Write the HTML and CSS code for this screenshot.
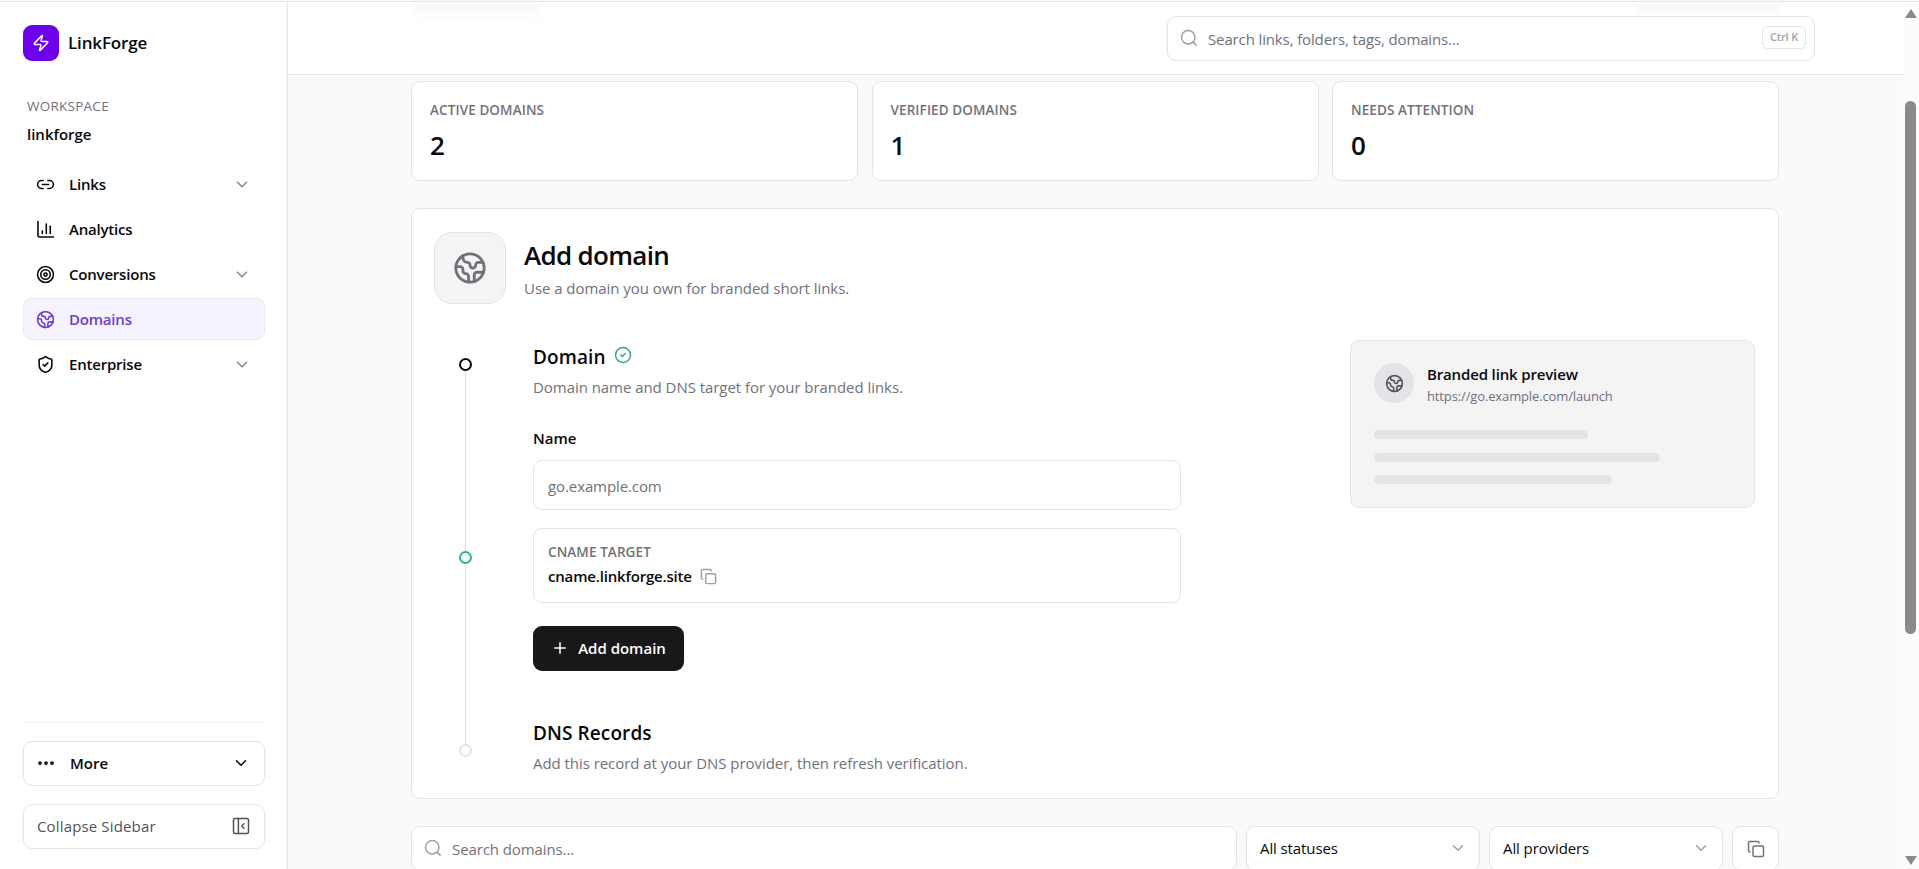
FILE: index.html
```
<!DOCTYPE html>
<html lang="en">
<head>
  <meta charset="utf-8">
  <title>Domains - LinkForge</title>
  <link rel="stylesheet" href="styles.css">
</head>
<body>
  <svg class="sprite">
    <symbol id="i-zap" viewBox="0 0 24 24"><path d="M4 14a1 1 0 0 1-.78-1.63l9.9-10.2a.5.5 0 0 1 .86.46l-1.92 6.02A1 1 0 0 0 13 10h7a1 1 0 0 1 .78 1.63l-9.9 10.2a.5.5 0 0 1-.86-.46l1.92-6.02A1 1 0 0 0 11 14z"/></symbol>
    <symbol id="i-link" viewBox="0 0 24 24"><path d="M9 17H7A5 5 0 0 1 7 7h2"/><path d="M15 7h2a5 5 0 1 1 0 10h-2"/><path d="M8 12h8"/></symbol>
    <symbol id="i-chart" viewBox="0 0 24 24"><path d="M2.5 2v17.5a2 2 0 0 0 2 2H22"/><path d="M8 17v-3"/><path d="M13 17V5"/><path d="M18 17V8"/></symbol>
    <symbol id="i-target" viewBox="0 0 24 24"><circle cx="12" cy="12" r="10"/><circle cx="12" cy="12" r="6"/><circle cx="12" cy="12" r="2"/></symbol>
    <symbol id="i-earth" viewBox="0 0 24 24"><path d="M21.54 15H17a2 2 0 0 0-2 2v4.54"/><path d="M7 3.34V5a3 3 0 0 0 3 3a2 2 0 0 1 2 2c0 1.1.9 2 2 2a2 2 0 0 0 2-2c0-1.1.9-2 2-2h3.17"/><path d="M11 21.95V18a2 2 0 0 0-2-2a2 2 0 0 1-2-2v-1a2 2 0 0 0-2-2H2.05"/><circle cx="12" cy="12" r="10"/></symbol>
    <symbol id="i-shield" viewBox="0 0 24 24"><path d="M20 13c0 5-3.5 7.5-7.66 8.95a1 1 0 0 1-.67-.01C7.5 20.5 4 18 4 13V6a1 1 0 0 1 1-1c2 0 4.5-1.2 6.24-2.72a1.17 1.17 0 0 1 1.52 0C14.51 3.81 17 5 19 5a1 1 0 0 1 1 1z"/><path d="m9 12 2 2 4-4"/></symbol>
    <symbol id="i-down" viewBox="0 0 24 24"><path d="m6 9 6 6 6-6"/></symbol>
    <symbol id="i-dots" viewBox="0 0 24 24"><circle cx="12" cy="12" r="1"/><circle cx="20" cy="12" r="1"/><circle cx="4" cy="12" r="1"/></symbol>
    <symbol id="i-panel" viewBox="0 0 24 24"><rect x="2" y="2" width="20" height="20" rx="2"/><path d="M8.5 2v20"/><path d="m16 15-3-3 3-3"/></symbol>
    <symbol id="i-search" viewBox="0 0 24 24"><circle cx="11" cy="11" r="9"/><path d="m21.500 21.500-4-4"/></symbol>
    <symbol id="i-check" viewBox="0 0 24 24"><circle cx="12" cy="12" r="10"/><path d="m9 12 2 2 4-4"/></symbol>
    <symbol id="i-copy" viewBox="0 0 24 24"><rect x="8" y="8" width="14" height="14" rx="2"/><path d="M4 16c-1.1 0-2-.9-2-2V4c0-1.1.9-2 2-2h10c1.1 0 2 .9 2 2"/></symbol>
    <symbol id="i-plus" viewBox="0 0 24 24"><path d="M5 12h14"/><path d="M12 5v14"/></symbol>
  </svg>

  <div class="topline"></div>
  <div class="app">
    <aside class="sidebar">
      <div class="brand">
        <span class="logo"><svg class="icon"><use href="#i-zap"/></svg></span>
        <span class="brand-name">LinkForge</span>
      </div>
      <div class="workspace">
        <div class="caps">WORKSPACE</div>
        <div class="workspace-name">linkforge</div>
      </div>
      <nav class="nav">
        <a class="nav-item"><svg class="icon"><use href="#i-link"/></svg><span>Links</span><svg class="icon chev"><use href="#i-down"/></svg></a>
        <a class="nav-item"><svg class="icon"><use href="#i-chart"/></svg><span>Analytics</span></a>
        <a class="nav-item"><svg class="icon"><use href="#i-target"/></svg><span>Conversions</span><svg class="icon chev"><use href="#i-down"/></svg></a>
        <a class="nav-item active"><svg class="icon"><use href="#i-earth"/></svg><span>Domains</span></a>
        <a class="nav-item"><svg class="icon"><use href="#i-shield"/></svg><span>Enterprise</span><svg class="icon chev"><use href="#i-down"/></svg></a>
      </nav>
      <div class="side-footer">
        <button class="side-btn more"><svg class="icon dots"><use href="#i-dots"/></svg><span>More</span><svg class="icon"><use href="#i-down"/></svg></button>
        <button class="side-btn collapse"><span>Collapse Sidebar</span><svg class="icon"><use href="#i-panel"/></svg></button>
      </div>
    </aside>

    <div class="page">
      <header class="topbar">
        <div class="ghost ghost-title"></div>
        <div class="ghost ghost-button"></div>
        <div class="search">
          <svg class="icon"><use href="#i-search"/></svg>
          <span>Search links, folders, tags, domains...</span>
          <kbd>Ctrl K</kbd>
        </div>
      </header>
      <main class="content">
        <section class="stats">
          <div class="card stat"><div class="caps">ACTIVE DOMAINS</div><div class="num">2</div></div>
          <div class="card stat"><div class="caps">VERIFIED DOMAINS</div><div class="num">1</div></div>
          <div class="card stat"><div class="caps">NEEDS ATTENTION</div><div class="num">0</div></div>
        </section>

        <section class="card add">
          <div class="add-head">
            <div class="tile"><svg class="icon"><use href="#i-earth"/></svg></div>
            <div>
              <h1>Add domain</h1>
              <p class="muted">Use a domain you own for branded short links.</p>
            </div>
          </div>
          <div class="add-body">
            <div class="timeline">
              <i class="dot dark"></i>
              <i class="rule"></i>
              <i class="dot green"></i>
              <i class="rule"></i>
              <i class="dot"></i>
            </div>
            <div class="steps">
              <h2>Domain <svg class="icon"><use href="#i-check"/></svg></h2>
              <p class="muted">Domain name and DNS target for your branded links.</p>
              <div class="label">Name</div>
              <div class="field">go.example.com</div>
              <div class="cname">
                <div class="caps">CNAME TARGET</div>
                <div class="cname-value">cname.linkforge.site <svg class="icon"><use href="#i-copy"/></svg></div>
              </div>
              <button class="primary"><svg class="icon"><use href="#i-plus"/></svg>Add domain</button>
              <h2>DNS Records</h2>
              <p class="muted">Add this record at your DNS provider, then refresh verification.</p>
            </div>
            <div class="preview">
              <div class="preview-head">
                <div class="avatar"><svg class="icon"><use href="#i-earth"/></svg></div>
                <div>
                  <div class="preview-title">Branded link preview</div>
                  <div class="preview-url">https://go.example.com/launch</div>
                </div>
              </div>
              <div class="bar bar-a"></div>
              <div class="bar bar-b"></div>
              <div class="bar bar-c"></div>
            </div>
          </div>
        </section>

        <section class="filters">
          <div class="filter find"><svg class="icon"><use href="#i-search"/></svg><span>Search domains...</span></div>
          <div class="filter select"><span>All statuses</span><svg class="icon"><use href="#i-down"/></svg></div>
          <div class="filter select"><span>All providers</span><svg class="icon"><use href="#i-down"/></svg></div>
          <div class="filter copy"><svg class="icon"><use href="#i-copy"/></svg></div>
        </section>
      </main>
    </div>

    <div class="scrollbar">
      <i class="arrow up"></i>
      <i class="thumb"></i>
      <i class="arrow down"></i>
    </div>
  </div>
</body>
</html>
```
FILE: styles.css
```
* {
  box-sizing: border-box;
}
body {
  margin: 0;
  height: 100vh;
  overflow: hidden;
  display: flex;
  flex-direction: column;
  font-family: "Open Sans", "Noto Sans", sans-serif;
  font-size: 15px;
  line-height: 22px;
  color: #09090b;
  background: #fff;
}
h1, h2, p {
  margin: 0;
}
button {
  font: inherit;
  color: inherit;
}
.sprite {
  display: none;
}
.icon {
  width: 18px;
  height: 18px;
  flex: none;
  fill: none;
  stroke: currentColor;
  stroke-width: 2;
  stroke-linecap: round;
  stroke-linejoin: round;
}
.topline {
  flex: none;
  height: 2px;
  background: #fffaf5;
  border-bottom: 1px solid #f6dccb;
}
.app {
  flex: 1;
  min-height: 0;
  display: flex;
}
.caps {
  font-size: 13.5px;
  line-height: 18px;
  font-weight: 600;
  letter-spacing: 0.1px;
  color: #71717a;
}
.muted {
  color: #71717a;
  letter-spacing: -0.05px;
}

/* sidebar */
.sidebar {
  width: 288px;
  flex: none;
  display: flex;
  flex-direction: column;
  padding: 23px 22px 20px 23px;
  border-right: 1px solid #e4e4e7;
}
.brand {
  display: flex;
  align-items: center;
  gap: 9px;
}
.logo {
  width: 36px;
  height: 36px;
  display: flex;
  align-items: center;
  justify-content: center;
  border-radius: 9px;
  background: #6d00ea;
  color: #fff;
}
.brand-name {
  font-size: 17px;
  font-weight: 600;
  letter-spacing: -0.15px;
}
.workspace {
  padding: 36px 4px 0;
}
.workspace .caps {
  font-weight: 500;
  letter-spacing: 0.25px;
}
.workspace-name {
  margin-top: 8px;
  font-weight: 600;
}
.nav {
  display: flex;
  flex-direction: column;
  gap: 3px;
  margin-top: 18px;
}
.nav-item {
  height: 42px;
  display: flex;
  align-items: center;
  padding: 0 13px 0 12px;
  border: 1px solid transparent;
  border-radius: 9px;
  font-weight: 600;
  letter-spacing: -0.2px;
}
.nav-item .icon {
  width: 19px;
  height: 19px;
}
.nav-item span {
  flex: 1;
  margin-left: 14px;
}
.nav-item .chev {
  width: 18px;
  color: #85858b;
}
.nav-item.active {
  color: #6d3fd0;
  background: #f5f3ff;
  border-color: #ebe7fd;
}
.side-footer {
  margin-top: auto;
  display: flex;
  flex-direction: column;
  gap: 18px;
  padding-top: 18px;
  border-top: 1px solid #f1f1f3;
}
.side-btn {
  height: 45px;
  display: flex;
  align-items: center;
  padding: 0 14px 1px 13px;
  text-align: left;
  background: #fff;
  border: 1px solid #e4e4e7;
  border-radius: 9px;
}
.side-btn span {
  flex: 1;
}
.more {
  font-weight: 600;
}
.more span {
  margin-left: 15px;
}
.dots {
  stroke-width: 3;
}
.collapse {
  color: #52525b;
  font-weight: 500;
  letter-spacing: 0.15px;
}

/* top bar */
.page {
  flex: 1;
  display: flex;
  flex-direction: column;
  background: #fafafa;
}
.topbar {
  position: relative;
  height: 73px;
  flex: none;
  display: flex;
  justify-content: flex-end;
  padding: 14px 88px 0 0;
  background: #fff;
  border-bottom: 1px solid #e4e4e7;
}
.ghost {
  position: absolute;
  top: 0;
  height: 20px;
  background: linear-gradient(#f6f6f5, #fff);
  filter: blur(3px);
}
.ghost-title {
  left: 126px;
  width: 126px;
}
.ghost-button {
  right: 122px;
  width: 145px;
}
.search {
  position: relative;
  width: 648px;
  height: 45px;
  display: flex;
  align-items: center;
  padding: 0 8px 0 12px;
  background: #fff;
  border: 1px solid #e4e4e7;
  border-radius: 9px;
  color: #71717a;
  letter-spacing: -0.13px;
}
.search .icon {
  margin-top: -2px;
  color: #9f9fa9;
}
.search span {
  flex: 1;
  margin-left: 10px;
}
kbd {
  width: 44px;
  height: 23px;
  margin-top: -2px;
  border: 1px solid #e4e4e7;
  border-radius: 6px;
  font: 600 11px/20px "Open Sans", sans-serif;
  text-align: center;
  color: #9f9fa9;
}

/* content */
.content {
  flex: 1;
  min-height: 0;
  overflow: hidden;
  padding: 6px 124px 0 123px;
}
.card {
  background: #fff;
  border: 1px solid #e4e4e7;
  border-radius: 9px;
}
.stats {
  display: grid;
  grid-template-columns: repeat(3, 1fr);
  gap: 13.5px;
}
.stat {
  height: 100px;
  padding: 19px 18px;
}
.num {
  margin-top: 9px;
  font-size: 26px;
  line-height: 34px;
  font-weight: 600;
}
.add {
  height: 591px;
  margin-top: 27px;
  padding: 23px 23px 0 22px;
}
.add-head {
  display: flex;
  align-items: center;
  gap: 18px;
}
.tile {
  width: 72px;
  height: 72px;
  display: flex;
  align-items: center;
  justify-content: center;
  color: #71717a;
  background: #f4f4f5;
  border: 1px solid #e4e4e7;
  border-radius: 18px;
}
.tile .icon {
  width: 34px;
  height: 34px;
}
h1 {
  font-size: 26px;
  line-height: 34px;
  font-weight: 600;
  letter-spacing: -0.7px;
}
.add-head p {
  margin-top: 5px;
}
.add-body {
  display: flex;
  align-items: flex-start;
  margin-top: 36px;
}
.timeline {
  width: 99px;
  display: flex;
  flex-direction: column;
  align-items: center;
  padding: 18px 36px 0 0;
}
.dot {
  width: 13px;
  height: 13px;
  border: 2px solid #e4e4e7;
  border-radius: 50%;
}
.dot.dark {
  border-color: #09090b;
}
.dot.green {
  border-color: #2bb98a;
}
.rule {
  width: 1px;
  height: 180px;
  background: #dedee1;
}
.steps {
  width: 648px;
  padding-top: 1px;
}
h2 {
  display: flex;
  align-items: center;
  gap: 8px;
  font-size: 19px;
  line-height: 32px;
  font-weight: 600;
  letter-spacing: 0.1px;
}
h2 .icon {
  margin-top: -4px;
  color: #3aa57c;
}
.steps p {
  margin-top: 3px;
}
.label {
  margin-top: 29px;
  font-weight: 600;
}
.field {
  height: 50px;
  margin-top: 11px;
  padding: 14px;
  border: 1px solid #e4e4e7;
  border-radius: 9px;
  color: #71717a;
  letter-spacing: -0.1px;
}
.cname {
  height: 75px;
  margin-top: 18px;
  padding: 14px;
  border: 1px solid #e4e4e7;
  border-radius: 9px;
}
.cname-value {
  display: flex;
  align-items: center;
  gap: 8px;
  margin-top: 4px;
  font-weight: 600;
  letter-spacing: -0.18px;
}
.cname-value .icon {
  width: 17px;
  height: 17px;
  color: #9f9fa9;
}
.primary {
  width: 151px;
  height: 45px;
  display: flex;
  align-items: center;
  justify-content: center;
  gap: 9px;
  margin: 23px 0 46px;
  padding: 0 0 1px;
  border: 0;
  border-radius: 9px;
  background: #18181b;
  color: #fff;
  font-weight: 600;
}
.preview {
  width: 405px;
  height: 168px;
  margin-left: auto;
  padding: 22px 23px;
  background: #f4f4f5;
  border: 1px solid #e4e4e7;
  border-radius: 9px;
}
.preview-head {
  display: flex;
  align-items: center;
  gap: 13px;
  margin-bottom: 27px;
}
.avatar {
  width: 40px;
  height: 40px;
  display: flex;
  align-items: center;
  justify-content: center;
  border-radius: 50%;
  background: #e4e4e7;
  color: #52525b;
}
.avatar .icon {
  width: 19px;
  height: 19px;
}
.preview-title {
  font-weight: 600;
  letter-spacing: -0.15px;
}
.preview-url {
  margin: 2px 0 -2px;
  font-size: 13px;
  line-height: 18px;
  letter-spacing: -0.13px;
  color: #71717a;
}
.bar {
  height: 9px;
  margin-top: 13.5px;
  border-radius: 5px;
  background: #e4e4e7;
}
.bar-a {
  width: 60%;
}
.bar-b {
  width: 80%;
}
.bar-c {
  width: 66.67%;
}

.filters {
  display: grid;
  grid-template-columns: 1fr 234px 234px 47px;
  gap: 9px;
  margin-top: 27px;
}
.filter {
  height: 45px;
  display: flex;
  align-items: center;
  justify-content: space-between;
  padding: 0 12px 0 13px;
  background: #fff;
  border: 1px solid #e4e4e7;
  border-radius: 9px;
  letter-spacing: -0.1px;
}
.filter span {
  margin-top: -2px;
}
.find {
  justify-content: flex-start;
  gap: 10px;
  padding-left: 12px;
  color: #71717a;
}
.find span {
  margin-top: 0;
}
.find .icon, .select .icon {
  margin-top: -1px;
  color: #9f9fa9;
}
.copy {
  justify-content: center;
  color: #71717a;
}

.scrollbar {
  width: 16px;
  flex: none;
  display: flex;
  flex-direction: column;
  align-items: center;
  padding: 7px 1px 4px 0;
  background: #fcfcfc;
}
.arrow {
  border: 6px solid transparent;
}
.up {
  border-top: 0;
  border-bottom: 9px solid #8a8a8a;
}
.down {
  margin-top: auto;
  border-bottom: 0;
  border-top: 9px solid #8a8a8a;
}
.thumb {
  width: 11px;
  height: 533px;
  margin-top: 83px;
  border-radius: 6px;
  background: #8a8a8a;
}
```
